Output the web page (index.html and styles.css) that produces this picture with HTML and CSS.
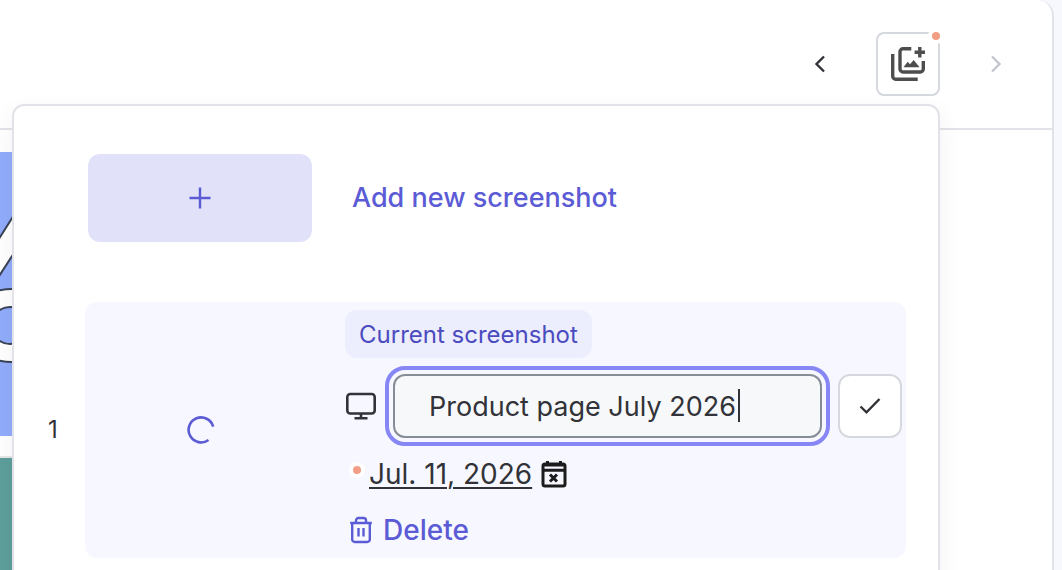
FILE: index.html
```html
<!DOCTYPE html>
<html lang="en">
<head>
  <meta charset="UTF-8">
  <meta name="viewport" content="width=device-width, initial-scale=1.0">
  <title>Screenshots</title>
  <link rel="stylesheet" href="styles.css">
</head>
<body>
  <main class="panel">
    <header class="toolbar">
      <button class="nav-button" type="button" aria-label="Previous screenshot">
        <svg width="12" height="18" viewBox="0 0 12 18"><path d="M10 1.5 2.5 9l7.500 7.500"/></svg>
      </button>
      <button class="history-button" type="button" aria-label="Screenshots" aria-expanded="true">
        <svg width="34" height="34" viewBox="0 0 34 34">
          <path class="line" d="M1.700 7v22.300a3 3 0 0 0 3 3H26.700"/>
          <path class="line" d="M20.300 1.700H12a3 3 0 0 0-3 3V22a3 3 0 0 0 3 3h17.300a3 3 0 0 0 3-3v-8"/>
          <path class="line" d="M28.800 0v10.400M23.600 5.200H34"/>
          <path class="fill" d="M12.500 20.200 16.700 14.700 19 17.300 22.700 13l5.800 7.200z"/>
        </svg>
        <span class="dot history-dot"></span>
      </button>
      <button class="nav-button" type="button" aria-label="Next screenshot" disabled>
        <svg width="12" height="18" viewBox="0 0 12 18"><path d="M2 1.500 9.500 9 2 16.500"/></svg>
      </button>
    </header>

    <div class="canvas">
      <!-- Hero section of the captured page -->
      <svg class="hero" height="284">
        <path d="M-12 104 26 44 44 55-12 141z"/>
        <rect x="-32" y="137" width="88" height="73" rx="44" ry="36"/>
        <circle class="hole" cx="10" cy="173.500" r="18.500"/>
      </svg>
      <div class="section"></div>
    </div>

    <!-- Screenshot history menu -->
    <section class="popover">
      <button class="add-button" type="button">
        <span class="add-tile">
          <svg width="22" height="22" viewBox="0 0 22 22"><path d="M11 .5v21M.5 11h21"/></svg>
        </span>
        Add new screenshot
      </button>

      <ol class="shots">
        <li class="shot">
          <span class="shot-number">1</span>
          <div class="shot-card">
            <div class="shot-preview">
              <svg class="spinner" width="28" height="28" viewBox="0 0 28 28"><path d="M26.200 10.700A12.500 12.500 0 1 0 21.500 24"/></svg>
            </div>
            <div class="shot-details">
              <span class="badge">Current screenshot</span>
              <form class="name-row">
                <svg class="monitor" width="32" height="28" viewBox="0 0 32 28">
                  <rect x="2.300" y="2" width="27.400" height="19.500" rx="3"/>
                  <path d="M16 21.500v4.500M9.500 26.200h13"/>
                </svg>
                <div class="field">
                  <input class="name-input" type="text" aria-label="Screenshot name" value="Product page July 2026">
                  <span class="caret"></span>
                </div>
                <button class="save-button" type="submit" aria-label="Save name">
                  <svg width="22" height="18" viewBox="0 0 22 18"><path d="m1.500 9.500 6 5.800L20.500 2"/></svg>
                </button>
              </form>
              <div class="date-row">
                <span class="dot"></span>
                <a class="date-link" href="#">Jul. 11, 2026</a>
                <button class="icon-button" type="button" aria-label="Clear date">
                  <svg width="26" height="28" viewBox="0 0 26 28">
                    <rect x="2" y="4" width="22" height="22" rx="2"/>
                    <path d="M6.500 1v4M19.500 1v4M2 10.300h22M2 5h22M9 14.500l7 7M16 14.500l-7 7"/>
                  </svg>
                </button>
              </div>
              <button class="delete-button" type="button">
                <svg width="24" height="28" viewBox="0 0 24 28">
                  <path d="M1.200 7h21.600M3.200 7v16.500a2.500 2.500 0 0 0 2.500 2.500h12.600a2.500 2.500 0 0 0 2.500-2.500V7M7 7V4.500a2.500 2.500 0 0 1 2.500-2.500h5A2.500 2.500 0 0 1 17 4.500V7M9.500 12v8.500M14.500 12v8.500"/>
                </svg>
                Delete
              </button>
            </div>
          </div>
        </li>
      </ol>
    </section>
  </main>
</body>
</html>
```

FILE: styles.css
```css
* {
  box-sizing: border-box;
}

body {
  margin: 0;
  height: 100vh;
  overflow: hidden;
  background: #f7f8fe;
  color: #323338;
  font-family: Inter, "Liberation Sans", sans-serif;
  font-size: 28px;
  line-height: 40px;
}

button {
  padding: 0;
  border: none;
  background: none;
  color: inherit;
  font: inherit;
  cursor: pointer;
}

svg {
  display: block;
  flex: none;
  fill: none;
  stroke: currentColor;
  stroke-width: 2.4;
}

/* Panel */
.panel {
  display: flex;
  flex-direction: column;
  position: relative;
  min-height: 100vh;
  margin-right: 8px;
  background: #fff;
  border-right: 2px solid #e2e2e9;
  border-top-right-radius: 16px;
}

.toolbar {
  display: flex;
  justify-content: flex-end;
  align-items: center;
  gap: 24px;
  height: 130px;
  padding: 0 24px;
  border-bottom: 2px solid #e2e2e9;
}

.nav-button,
.history-button,
.save-button {
  display: flex;
  justify-content: center;
  align-items: center;
  width: 64px;
  height: 64px;
}

.nav-button:disabled {
  color: #c3c6d0;
}

.history-button {
  position: relative;
  border: 2px solid #d5d9de;
  border-radius: 8px;
  color: #4d4d4d;
}

.history-button .line {
  stroke-width: 3.4;
}

.history-button .fill {
  fill: currentColor;
  stroke: none;
}

.dot {
  width: 16px;
  height: 16px;
  border: 4px solid #fff;
  border-radius: 50%;
  background: #f29e86;
}

.history-dot {
  position: absolute;
  top: -6px;
  right: -6px;
}

/* Captured page */
.canvas {
  display: flex;
  flex: 1;
  flex-direction: column;
  gap: 20px;
  width: 50%;
  padding-top: 22px;
}

.hero {
  width: 100%;
  background: #91acfb;
  fill: #fff;
  stroke: #3a4256;
  stroke-width: 2;
}

.hero .hole {
  fill: #91acfb;
}

.section {
  flex: 1;
  border-top: 2px solid #e6e6e6;
  background: #5d9f9b;
}

/* Popover */
.popover {
  position: absolute;
  top: 104px;
  left: 12px;
  right: 112px;
  padding: 48px 32px 48px 34px;
  border: 2px solid #e2e2e9;
  border-radius: 12px;
  background: #fff;
  box-shadow: 0 8px 24px rgba(0, 0, 0, 0.06);
}

.add-button {
  display: flex;
  align-items: center;
  gap: 40px;
  margin-left: 40px;
  color: #5b5bd6;
  font-size: 27px;
  font-weight: 500;
}

.add-tile {
  display: flex;
  justify-content: center;
  align-items: center;
  width: 224px;
  height: 88px;
  border-radius: 12px;
  background: #e1e1f9;
}

.shots {
  margin: 60px 0 0;
  padding: 0;
  list-style: none;
}

.shot {
  display: flex;
  align-items: center;
}

.shot-number {
  width: 37px;
  font-size: 24px;
}

.shot-card {
  display: flex;
  flex: 1;
  gap: 32px;
  padding: 8px 4px 0;
  border-radius: 12px;
  background: #f7f7ff;
}

.shot-preview {
  display: flex;
  justify-content: center;
  align-items: center;
  width: 224px;
  padding-bottom: 8px;
  color: #5b5bd6;
}

.spinner {
  stroke-width: 2.6;
}

.shot-details {
  flex: 1;
}

.badge {
  display: block;
  width: fit-content;
  padding: 5px 14px 3px;
  border-radius: 12px;
  background: #ecedfd;
  color: #4b4bc0;
  font-size: 24px;
}

.name-row {
  display: flex;
  align-items: center;
  gap: 16px;
  margin: 16px 0 8px;
}

.monitor {
  stroke-width: 2.6;
}

.field {
  position: relative;
  flex: 1;
}

.name-input {
  display: block;
  width: 100%;
  height: 64px;
  padding: 0 34px;
  border: 2px solid #878d96;
  border-radius: 12px;
  outline: 4px solid #8686f4;
  outline-offset: 4px;
  background: #f6f8fa;
  color: inherit;
  font: inherit;
  font-size: 27px;
  caret-color: transparent;
}

.caret {
  position: absolute;
  top: 15px;
  left: 345px;
  width: 2px;
  height: 33px;
  background: #323338;
}

.save-button {
  border: 2px solid #d5d9de;
  border-radius: 12px;
  background: #fff;
}

.date-row {
  display: flex;
  align-items: center;
  height: 56px;
  padding-left: 4px;
}

.date-row .dot {
  margin: 0 4px 8px 0;
}

.date-link {
  color: inherit;
  text-decoration-thickness: 2px;
  text-underline-offset: 3px;
}

.icon-button {
  margin-left: 9px;
  color: #1c1c1e;
}

.icon-button svg {
  stroke-width: 3;
}

.delete-button {
  display: flex;
  align-items: center;
  gap: 10px;
  height: 56px;
  padding-left: 4px;
  color: #5b5bd6;
  font-weight: 500;
}
```
